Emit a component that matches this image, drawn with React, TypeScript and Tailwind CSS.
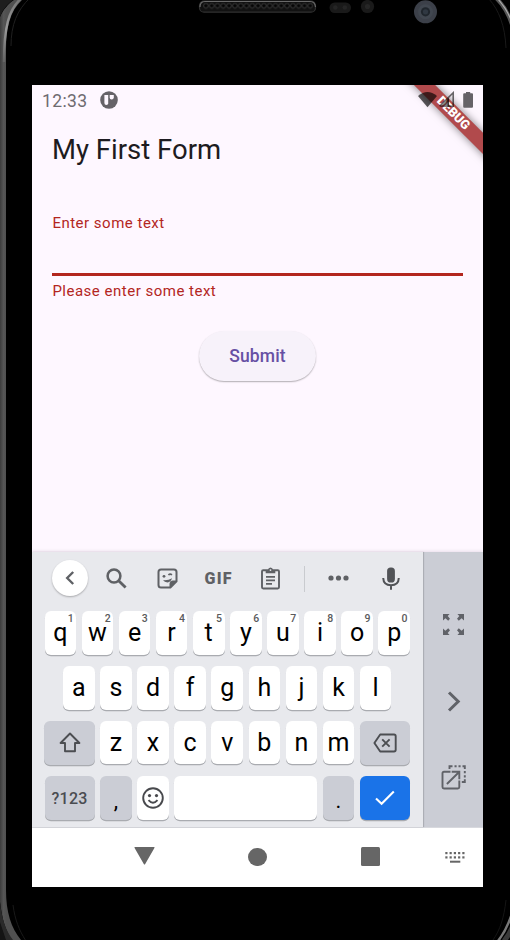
import React from "react";

const topRow = ["q", "w", "e", "r", "t", "y", "u", "i", "o", "p"];
const homeRow = ["a", "s", "d", "f", "g", "h", "j", "k", "l"];
const bottomRow = ["z", "x", "c", "v", "b", "n", "m"];

const keyShadow = "rounded-[6px] shadow-[0_1.3px_0.5px_#a9abb0]";

function Key({ label, hint }: { label: string; hint?: string }) {
  return (
    <div className={`relative flex h-[43.5px] w-[31.6px] shrink-0 items-center justify-center bg-white ${keyShadow}`}>
      <span className="-mt-[1px] text-[25px] leading-none text-black">{label}</span>
      {hint && (
        <span className="absolute right-[2.5px] top-[3px] text-[10.5px] font-medium leading-none text-[#5a5a5c]">{hint}</span>
      )}
    </div>
  );
}

function GrayKey({ wide, children }: { wide?: boolean; children: React.ReactNode }) {
  return (
    <div
      className={`flex h-[44px] shrink-0 items-center justify-center bg-[#cbcdd5] ${keyShadow} ${wide ? "w-[50.2px]" : "w-[31.6px]"}`}
    >
      {children}
    </div>
  );
}

function DeviceFrame() {
  return (
    <svg className="absolute inset-0" width="510" height="940" viewBox="0 0 510 940" fill="none">
      <defs>
        <linearGradient id="rim" x1="0" x2="6" y1="0" y2="0" gradientUnits="userSpaceOnUse">
          <stop offset="0" stopColor="#3c3c3c" />
          <stop offset="0.6" stopColor="#565656" />
          <stop offset="1" stopColor="#505050" />
        </linearGradient>
        <linearGradient id="shine" x1="0" x2="0" y1="0" y2="70" gradientUnits="userSpaceOnUse">
          <stop offset="0" stopColor="#777" />
          <stop offset="0.4" stopColor="#999" />
          <stop offset="1" stopColor="#565656" />
        </linearGradient>
        <pattern id="mesh" width="5.8" height="7" x="203" y="2.5" patternUnits="userSpaceOnUse">
          <circle cx="2.9" cy="3.2" r="2.3" fill="#050505" stroke="#444" strokeWidth="0.8" />
        </pattern>
      </defs>
      <rect width="510" height="940" fill="#000" />
      <path d="M0 17C3 10 8 4 14 0H22C10 11 6 28 6 50V890C6 912 11 928 21 940H12C5 930 2 918 0 902Z" fill="url(#rim)" />
      <path d="M0 0H13C6 5 2 11 0 17Z" fill="#1e1e1e" />
      <path d="M20.5 -1C8.5 10 4.2 27 4 62" stroke="url(#shine)" strokeWidth="2.4" />
      <path d="M30 -2C17 10 11 25 11 46" stroke="#202020" strokeWidth="1" />
      <path d="M0 902C2 920 6 931 13 940H0Z" fill="#2a2a2a" />
      <path d="M0 922L6 940H0Z" fill="#141414" />
      <path d="M13 905C15 920 19 930 26 941" stroke="#191919" strokeWidth="1" />
      <path d="M495 -3C503 4 509 14 513 28" stroke="#555" strokeWidth="4" />
      <path d="M496 -3C504 5 510 15 514 28" stroke="#aaa" strokeWidth="1.2" />
      <path d="M489 -1C499 10 505 26 506 48" stroke="#191919" strokeWidth="1" />
      <path d="M513 910C509 924 505 932 498 941" stroke="#777" strokeWidth="2.5" />
      <path d="M514 922C512 930 508 936 504 941" stroke="#3a3a3a" strokeWidth="5" />
      <path d="M506 900C504 918 500 930 493 940" stroke="#151515" strokeWidth="1" />
      <rect x="199.5" y="1.2" width="116" height="11" rx="4.5" fill="#111" stroke="#303030" strokeWidth="1.2" />
      <path d="M200 7Q200 1.5 205 1.5H310Q315 1.5 315.5 7" stroke="#6a6a6a" strokeWidth="1.2" />
      <rect x="203" y="2.5" width="110" height="7" fill="url(#mesh)" />
      <rect x="329.5" y="2.5" width="21.5" height="10.5" rx="5.2" fill="#1a1a1a" />
      <circle cx="335.3" cy="7.5" r="2.3" fill="#252525" />
      <circle cx="344.8" cy="7.5" r="2.3" fill="#252525" />
      <circle cx="367.5" cy="6.5" r="6.6" fill="#1a1a1a" />
      <circle cx="367.5" cy="6.5" r="2.6" fill="#262626" />
      <circle cx="425.5" cy="11.8" r="11.5" fill="#3c4049" />
      <circle cx="425.5" cy="11.8" r="7.5" fill="#414750" />
      <circle cx="425.5" cy="11.8" r="4.6" fill="#20262d" />
      <circle cx="425.5" cy="11.8" r="2.6" fill="#303842" />
    </svg>
  );
}

function StatusBar() {
  return (
    <div className="flex h-[31px] items-center pl-[10px] pr-[9.5px]">
      <span className="w-[58px] pt-[1.5px] text-[17.5px] leading-none tracking-[0.4px] text-[#6e6b70]">12:33</span>
      <svg className="-mt-[2px]" width="18" height="18" viewBox="0 0 18 18">
        <circle cx="9" cy="9" r="8.8" fill="#666368" />
        <path d="M4.4 4H8.2V12.2Q8.2 14 6.4 14Q4.4 14 4.4 12Z" fill="#fef7ff" />
        <path d="M9.7 4H13.8V6.3Q13.8 8.5 11.5 8.5Q9.7 8.5 9.7 6.7Z" fill="#fef7ff" />
      </svg>
      <svg className="relative z-10 -mt-[1px] ml-auto" width="56" height="18" viewBox="0 0 56 18">
        <path d="M0 5.1Q9.5 -2.9 19 5.1L9.5 16.3Z" fill="#000" fillOpacity="0.65" />
        <path d="M21.6 15.3L35.2 1.8V15.3H30.3V6.7L21.6 15.3Z" fill="none" stroke="#000" strokeOpacity="0.58" strokeWidth="1.6" />
        <path d="M22 16L30.8 7.3V16Z" fill="#000" fillOpacity="0.5" />
        <path d="M48 1H52.2V2.2H54Q55 2.2 55 3.2V15.7Q55 16.8 54 16.8H46.2Q45.2 16.8 45.2 15.7V3.2Q45.2 2.2 46.2 2.2H48Z" fill="#666368" />
      </svg>
    </div>
  );
}

function DebugBanner() {
  return (
    <div className="absolute left-[351.5px] top-[22.3px] flex h-[15.1px] w-[140px] rotate-45 items-center justify-center bg-[#b14a4c] shadow-[0_0_9px_rgba(0,0,0,0.5)]">
      <span className="-ml-[3px] text-[12.7px] font-black leading-none text-white">DEBUG</span>
    </div>
  );
}

function Toolbar() {
  return (
    <div className="flex h-[53px] items-center pl-5 text-[#5f6165]">
      <div className="-mt-px flex size-9 items-center justify-center rounded-full bg-white shadow-[0_1px_2px_rgba(0,0,0,0.28)]">
        <svg width="12" height="16" viewBox="0 0 12 16" fill="none" stroke="currentColor" strokeWidth="2.4">
          <path d="M9.2 2L3.2 8L9.2 14" />
        </svg>
      </div>
      <svg className="ml-[18px]" width="21" height="21" viewBox="0 0 21 21" fill="none" stroke="currentColor" strokeWidth="2.5">
        <circle cx="8" cy="8" r="6.4" />
        <path d="M12.4 12.4L19.6 19.6" strokeWidth="2.8" />
      </svg>
      <svg className="ml-[30px]" width="21" height="21" viewBox="0 0 21 21" fill="none" stroke="currentColor" strokeWidth="2">
        <path d="M4 1.5H17Q19.5 1.5 19.5 4V13.4L13.4 19.5H4Q1.5 19.5 1.5 17V4Q1.5 1.5 4 1.5Z" />
        <path d="M19.5 13H15.5Q13 13 13 15.5V19.5Z" fill="currentColor" strokeWidth="1" />
        <circle cx="7" cy="8.3" r="1.4" fill="currentColor" stroke="none" />
        <path d="M11.4 7Q13 5.4 15 6.8" strokeWidth="1.6" />
        <path d="M6 12.1Q11 12.7 15 10.3Q13.8 14.4 10.5 14.4Q7.4 14.4 6 12.1Z" fill="currentColor" stroke="none" />
      </svg>
      <span className="ml-[26.5px] w-[30px] pt-px text-[16px] font-black leading-none tracking-[1.3px]">GIF</span>
      <svg className="ml-[26.5px]" width="19" height="23" viewBox="0 0 19 23" fill="none" stroke="currentColor" strokeWidth="1.9">
        <rect x="1" y="3.2" width="17" height="18.3" rx="1.2" />
        <path d="M4.7 3H7Q7.2 0.5 9.5 0.5T12 3H14.3V6.3H4.7Z" fill="currentColor" stroke="none" />
        <circle cx="9.5" cy="3.1" r="0.9" fill="#e8e9ed" stroke="none" />
        <path d="M5 9.8H14M5 13.3H14M5 16.8H11" strokeWidth="1.7" />
      </svg>
      <div className="ml-[24px] h-[26px] w-px bg-[#c9cbcf]" />
      <svg className="-mt-px ml-[23px]" width="21" height="6" viewBox="0 0 21 6" fill="currentColor">
        <circle cx="3" cy="3" r="2.6" />
        <circle cx="10.5" cy="3" r="2.6" />
        <circle cx="18" cy="3" r="2.6" />
      </svg>
      <svg className="-mt-px ml-[33px]" width="18" height="23" viewBox="0 0 18 23" fill="none" stroke="#515357" strokeWidth="2">
        <rect x="5.1" y="0.5" width="7.8" height="15" rx="3.6" fill="#515357" stroke="none" />
        <path d="M1.2 11Q1.5 18.2 9 18.2T16.8 11M9 18V22.8" />
      </svg>
    </div>
  );
}

function Keyboard() {
  return (
    <div className="flex h-[276px] border-b border-[#d8d9de] bg-[#cbcdd5] shadow-[0_-1px_3px_rgba(80,50,80,0.12)]">
      <div className="w-[391px] shrink-0 bg-[#e8e9ed] shadow-[1px_0_1px_rgba(0,0,0,0.15)]">
        <Toolbar />
        <div className="flex flex-col items-center gap-[11.3px] pr-[0.5px] pt-[6.3px]">
          <div className="flex gap-[5.5px]">
            {topRow.map((key, i) => (
              <Key key={key} label={key} hint={String((i + 1) % 10)} />
            ))}
          </div>
          <div className="flex gap-[5.5px]">
            {homeRow.map((key) => (
              <Key key={key} label={key} />
            ))}
          </div>
          <div className="flex gap-[5.5px]">
            <GrayKey wide>
              <svg width="22" height="21" viewBox="0 0 22 21" fill="none" stroke="#4c4e52" strokeWidth="1.9" strokeLinejoin="round">
                <path d="M11 1.5L20.4 11H16V19.3H6V11H1.6Z" />
              </svg>
            </GrayKey>
            {bottomRow.map((key) => (
              <Key key={key} label={key} />
            ))}
            <GrayKey wide>
              <svg width="24" height="20" viewBox="0 0 24 20" fill="none" stroke="#4c4e52" strokeWidth="1.9">
                <path d="M7.2 1.5H21Q22.7 1.5 22.7 3.2V16.8Q22.7 18.5 21 18.5H7.2L1.4 10Z" strokeLinejoin="round" />
                <path d="M9.2 6.3L16.6 13.7M16.6 6.3L9.2 13.7" />
              </svg>
            </GrayKey>
          </div>
          <div className="flex gap-[5.5px]">
            <GrayKey wide>
              <span className="pt-[2px] text-[16px] font-medium leading-none tracking-[0.3px] text-[#4a4c51]">?123</span>
            </GrayKey>
            <GrayKey>
              <span className="pt-[5px] text-[22px] leading-none text-black">,</span>
            </GrayKey>
            <div className={`flex h-[44px] w-[31.6px] items-center justify-center bg-white ${keyShadow}`}>
              <svg width="22" height="22" viewBox="0 0 22 22" fill="none" stroke="#48494d" strokeWidth="1.9">
                <circle cx="11" cy="11" r="9.8" />
                <circle cx="7.5" cy="8.6" r="1.6" fill="#48494d" stroke="none" />
                <circle cx="14.5" cy="8.6" r="1.6" fill="#48494d" stroke="none" />
                <path d="M6.5 13.2Q11 18.3 15.5 13.2" />
              </svg>
            </div>
            <div className={`h-[44px] w-[142.8px] bg-white ${keyShadow}`} />
            <GrayKey>
              <span className="pt-[5px] text-[22px] leading-none text-black">.</span>
            </GrayKey>
            <div className={`flex h-[44px] w-[50.2px] items-center justify-center bg-[#1a73e8] ${keyShadow}`}>
              <svg width="20" height="16" viewBox="0 0 20 16" fill="none" stroke="#fff" strokeWidth="2.1">
                <path d="M1 8.5L6.6 13.8L18.8 1.5" />
              </svg>
            </div>
          </div>
        </div>
      </div>
      <div className="flex flex-1 flex-col items-center pt-[62px] text-[#606268]">
        <svg width="21" height="21" viewBox="0 0 21 21" fill="currentColor">
          <path d="M0 0H6.6L4.7 2.1L7 4.8L5.2 6.8L2.4 4.3L0 6.6Z" />
          <path d="M0 0H6.6L4.7 2.1L7 4.8L5.2 6.8L2.4 4.3L0 6.6Z" transform="translate(21 0) scale(-1 1)" />
          <path d="M0 0H6.6L4.7 2.1L7 4.8L5.2 6.8L2.4 4.3L0 6.6Z" transform="translate(0 21) scale(1 -1)" />
          <path d="M0 0H6.6L4.7 2.1L7 4.8L5.2 6.8L2.4 4.3L0 6.6Z" transform="translate(21 21) scale(-1 -1)" />
        </svg>
        <svg className="ml-px mt-[56px]" width="14" height="21" viewBox="0 0 14 21" fill="none" stroke="currentColor" strokeWidth="3">
          <path d="M2 1.5L11.2 10.5L2 19.5" />
        </svg>
        <svg className="mt-[53px]" width="25" height="25" viewBox="0 0 25 25" fill="none" stroke="currentColor" strokeWidth="1.9">
          <path d="M9.5 6.7H3Q1.5 6.7 1.5 8.2V22Q1.5 23.5 3 23.5H16.8Q18.3 23.5 18.3 22V15.5" />
          <path d="M5.9 19L17.6 7.5M10.7 6.8H18.3V14.2" />
          <path d="M8.5 4V1.2H11.5M13.5 1.2H15.6M17.5 1.2H19.6M21.5 1.2H23.8V4M23.8 6V8.2M23.8 10.2V12.4M23.8 14.2V17H20.8" />
        </svg>
      </div>
    </div>
  );
}

function NavBar() {
  return (
    <div className="flex h-[59px] items-start bg-white pl-[102px] text-[#666]">
      <svg className="mt-[19px]" width="21" height="18" viewBox="0 0 21 18" fill="currentColor">
        <path d="M1 0H20Q21 0 20.4 1L11.2 17Q10.5 18 9.8 17L0.6 1Q0 0 1 0Z" />
      </svg>
      <div className="ml-[93px] mt-[19.7px] size-[18.5px] rounded-full bg-[#666]" />
      <div className="ml-[94.5px] mt-[19.2px] size-[19px] rounded-[1.5px] bg-[#666]" />
      <svg className="ml-[64.5px] mt-[23.5px]" width="20" height="12" viewBox="0 0 20 12" fill="currentColor">
        {[0, 4.25, 8.5, 12.75, 17].map((x) => (
          <g key={x}>
            <rect x={x + 0.3} y="0" width="2.2" height="2.2" />
            <rect x={x + 0.3} y="4.3" width="2.2" height="2.2" />
          </g>
        ))}
        <rect x="5" y="8.7" width="10.3" height="2" />
      </svg>
    </div>
  );
}

export default function App() {
  return (
    <div className="relative h-[940px] w-[510px] overflow-hidden bg-black pl-8 pt-[85px] font-[Roboto,sans-serif]">
      <DeviceFrame />
      <main className="relative flex h-[802px] w-[451px] flex-col overflow-hidden bg-[#fef7ff]">
        <DebugBanner />
        <StatusBar />
        <h1 className="mt-[17px] pl-5 text-[27.5px] font-normal leading-[34px] text-[#1d1b20]">My First Form</h1>
        <div className="mt-[47px] px-5 text-[15px] leading-[18px] tracking-[0.5px] text-[#b3261e]">
          <div className="pl-[0.4px]">Enter some text</div>
          <div className="mt-[41px] h-[2.5px] bg-[#b3261e]" />
          <div className="mt-[6px] pl-[0.4px]">Please enter some text</div>
        </div>
        <button className="mx-auto mt-[31.5px] h-[50px] w-[117px] rounded-full bg-[#f7f2fa] text-[17.5px] font-medium tracking-[0.12px] text-[#6750a4] shadow-[0_1px_1.5px_rgba(0,0,0,0.3)]">
          Submit
        </button>
        <div className="mt-auto">
          <Keyboard />
          <NavBar />
        </div>
      </main>
    </div>
  );
}
